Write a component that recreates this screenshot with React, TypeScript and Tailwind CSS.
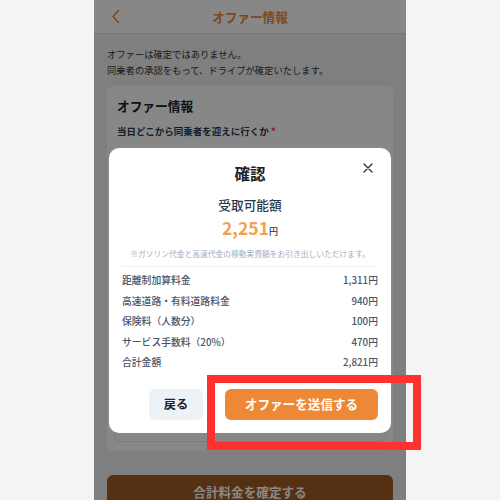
import React from "react";

const rows: [string, string][] = [
  ["距離制加算料金", "1,311円"],
  ["高速道路・有料道路料金", "940円"],
  ["保険料（人数分）", "100円"],
  ["サービス手数料（20%）", "470円"],
  ["合計金額", "2,821円"],
];

export default function App() {
  return (
    <div
      className="relative w-[500px] h-[500px] overflow-hidden bg-[#f4f4f4] flex justify-center"
      style={{ fontFamily: '"Noto Sans CJK JP", "Noto Sans", sans-serif' }}
    >
      <div className="relative w-[312px] h-[500px] bg-[#f0f0f0] flex flex-col">
        {/* header */}
        <div className="relative h-[34px] shrink-0 bg-white border-b border-[#e4e4e4] flex items-center justify-center">
          <svg className="absolute left-[17px] top-[9px]" width="10" height="15" viewBox="0 0 10 15" fill="none">
            <path d="M7.5 1.5 L2 7.5 L7.5 13.5" stroke="#ed8936" strokeWidth="1.6" strokeLinecap="round" strokeLinejoin="round" />
          </svg>
          <span className="text-[12.6px] leading-[20px] font-bold text-[#ed8936]">オファー情報</span>
        </div>

        <div className="px-[13px] pt-[12px] flex flex-col flex-1">
          <p className="text-[9.3px] leading-[16px] text-[#333]">
            オファーは確定ではありません。
            <br />
            同乗者の承認をもって、ドライブが確定いたします。
          </p>

          <div className="mt-[8px] bg-white rounded-md px-[10px] pt-[10px] h-[365px] flex flex-col">
            <h2 className="text-[12.7px] leading-[20px] font-bold text-[#1a202c]">オファー情報</h2>
            <div className="mt-[7px] text-[9.5px] leading-[16px] font-bold text-[#2d3748]">
              当日どこから同乗者を迎えに行くか <span className="text-[#e53e3e]">*</span>
            </div>
            <div className="mt-[10px] -mx-[3px] h-[293px] rounded-md border border-[#e2e8f0] bg-white" />
          </div>

          <div className="mt-[24px] h-[34px] rounded-md bg-[#a05c22] flex items-center justify-center">
            <span className="text-[12.6px] font-bold text-white">合計料金を確定する</span>
          </div>
        </div>

        {/* overlay */}
        <div className="absolute inset-0 bg-black/[0.47]" />

        {/* modal */}
        <div className="absolute left-[15px] top-[148px] w-[282px] bg-white rounded-[10px] px-[13px] pt-[13px] pb-[13px] flex flex-col">
          <svg className="absolute right-[18px] top-[15px]" width="10" height="10" viewBox="0 0 10 10">
            <path d="M1 1 L9 9 M9 1 L1 9" stroke="#2d3748" strokeWidth="1.4" strokeLinecap="round" />
          </svg>
          <div className="text-center text-[15.5px] leading-[24px] font-bold text-[#1a202c]">確認</div>
          <div className="mt-[10px] text-center text-[12.7px] leading-[20px] font-medium text-[#2d3748]">受取可能額</div>
          <div className="mt-[1px] text-center leading-[24px]">
            <span className="text-[17.5px] font-bold text-[#f5a04f]">2,251</span>
            <span className="text-[9px] font-medium text-[#2d3748]">円</span>
          </div>
          <div className="mt-[4px] text-center text-[7.75px] leading-[12px] text-[#a0aec0] whitespace-nowrap">
            ※ガソリン代金と高速代金の移動実費額をお引き出しいただけます。
          </div>
          <div className="mt-[6px] h-px bg-[#edf2f7]" />
          <div className="mt-[3px] flex flex-col">
            {rows.map(([l, v]) => (
              <div key={l} className="flex justify-between text-[9.8px] leading-[20.5px] font-medium text-[#4a5568]">
                <span>{l}</span>
                <span>{v}</span>
              </div>
            ))}
          </div>
          <div className="mt-[16px] flex justify-end gap-[22px]">
            <div className="w-[54px] h-[31px] rounded-md bg-[#edf2f7] flex items-center justify-center text-[12.2px] font-bold text-[#1a202c]">
              戻る
            </div>
            <div className="w-[153px] h-[31px] rounded-md bg-[#ed8936] flex items-center justify-center text-[12.6px] font-bold text-white">
              オファーを送信する
            </div>
          </div>
        </div>
      </div>

      {/* red highlight */}
      <div className="absolute left-[207px] top-[375px] w-[214px] h-[75px] border-[8px] border-[#ff3131]" />
    </div>
  );
}
